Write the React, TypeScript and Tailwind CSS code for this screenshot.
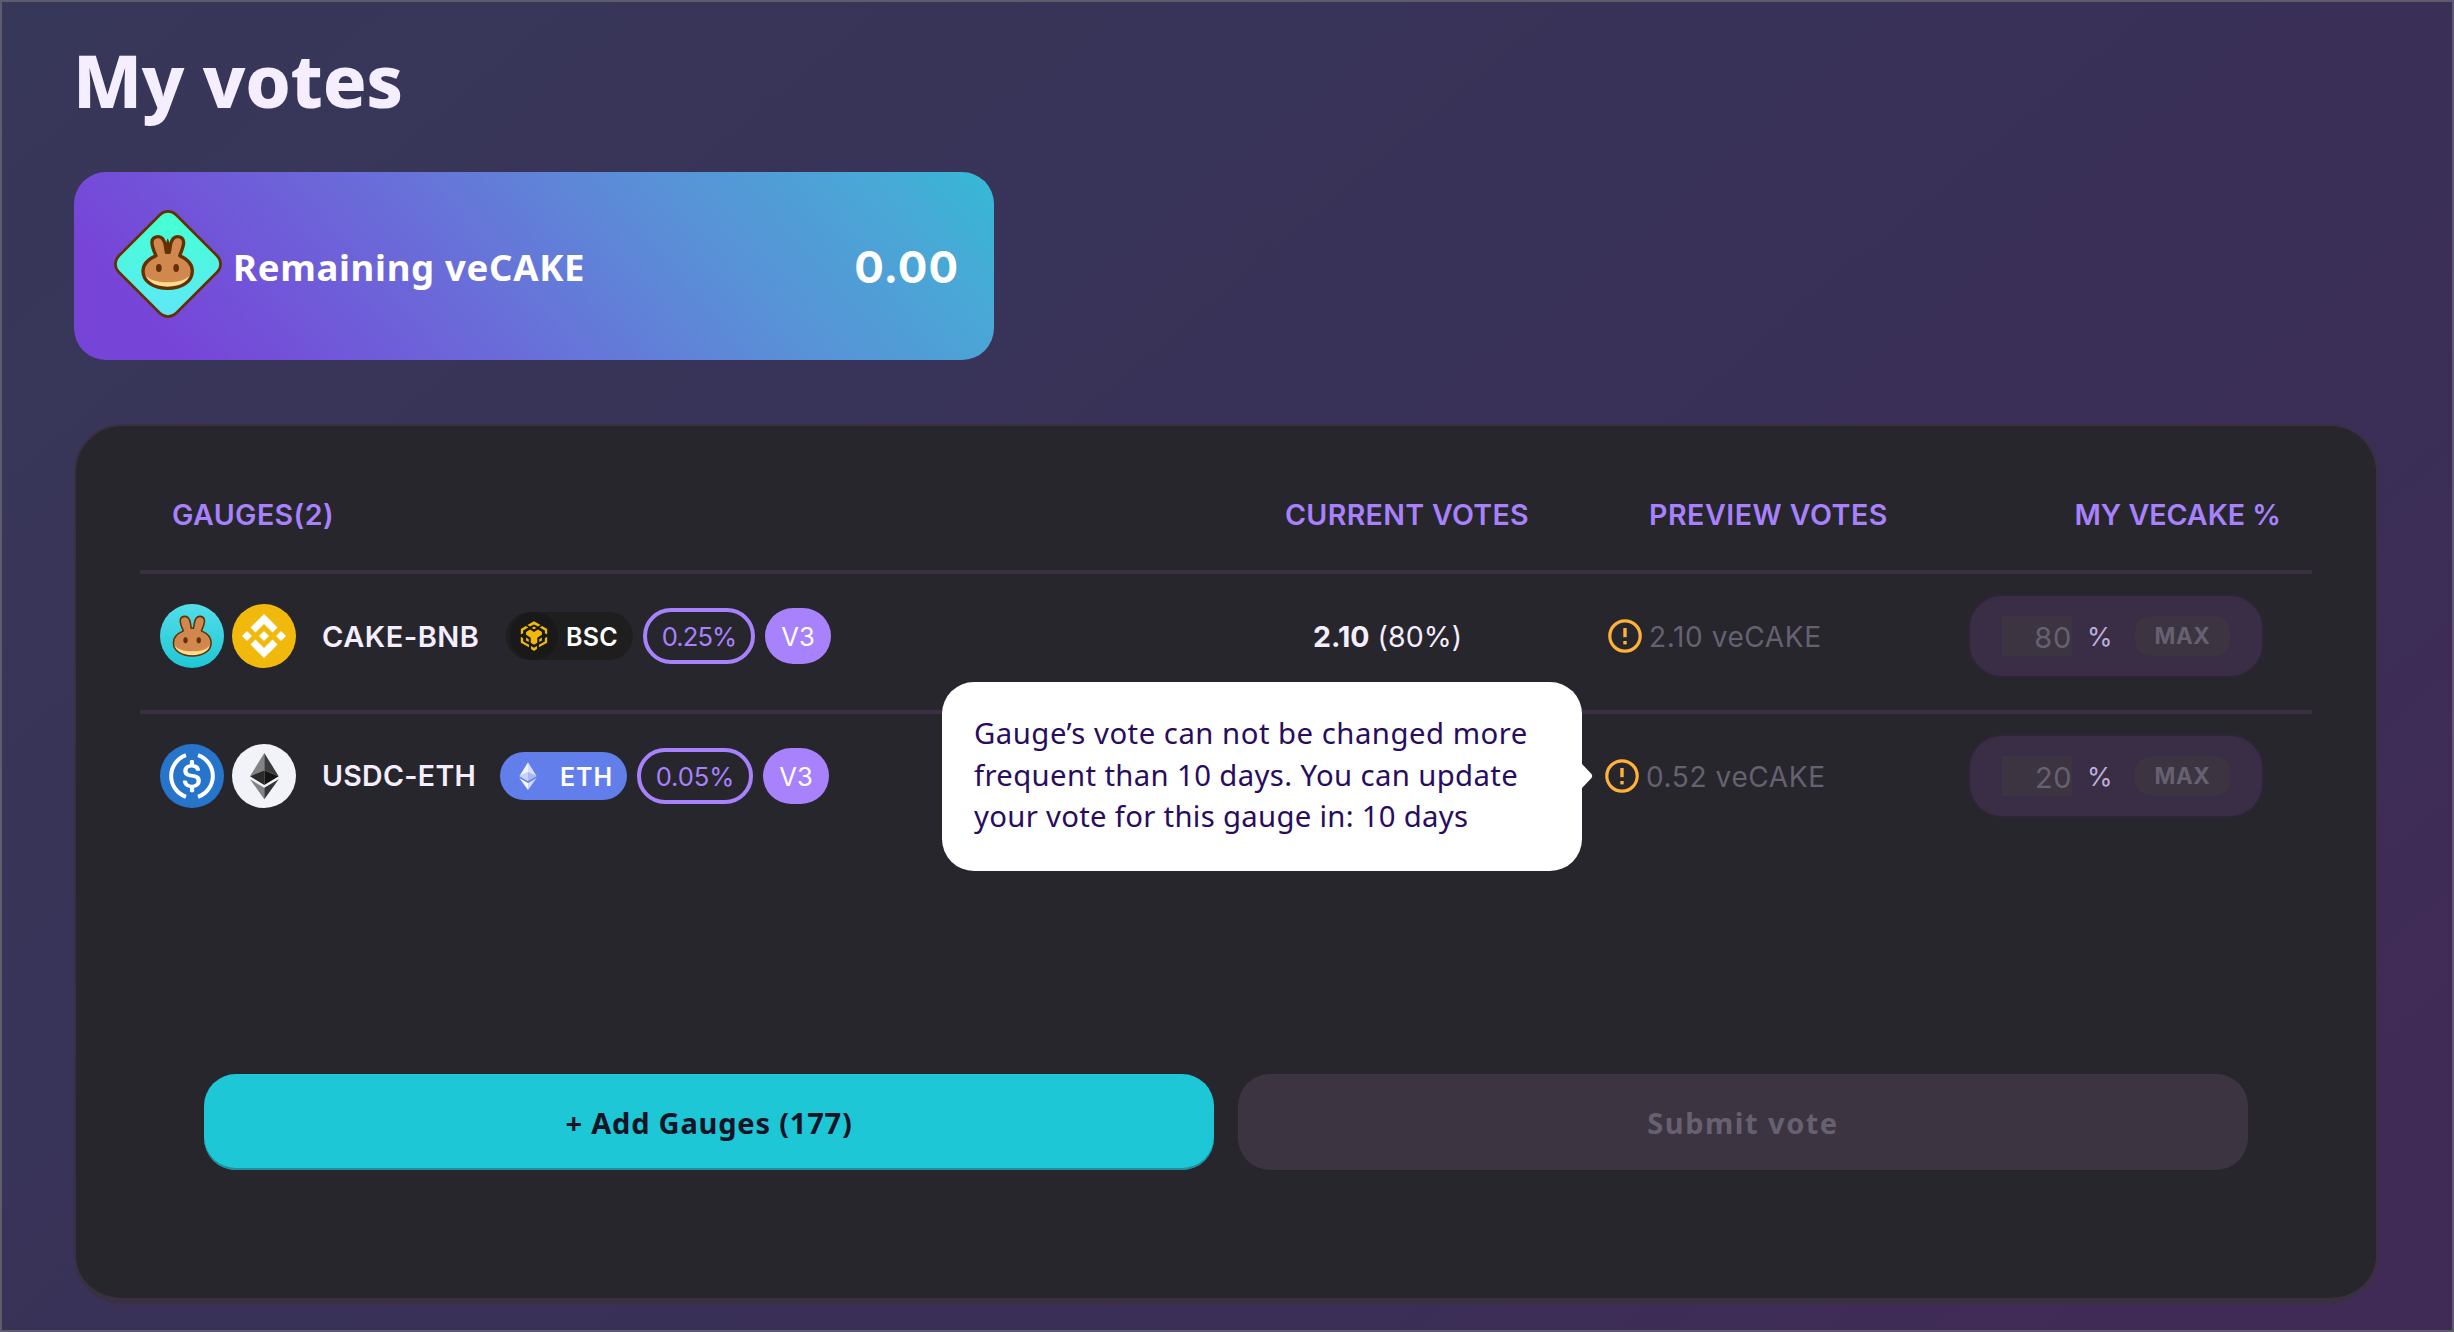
import type { ReactNode } from "react";

function Bunny({ outline }: { outline: number }) {
  return (
    <g>
      <path
        d="M168 197C160 180 155 165 156 155C157 145 164 140 175 140C187 140 193 151 196 167L199 187H208L211 167C214 151 220 140 232 140C244 140 250 147 251 157C251 168 245 183 239 197C262 207 277 222 277 243C277 275 245 295 203 295C161 295 129 275 129 243C129 222 145 207 168 197Z"
        fill="#D1884F"
      />
      <path d="M130 246C138 268 170 277 203 277C236 277 268 268 276 246C276 276 240 294 203 294C166 294 130 276 130 246Z" fill="#FEDC90" />
      <path
        d="M168 197C160 180 155 165 156 155C157 145 164 140 175 140C187 140 193 151 196 167L199 187H208L211 167C214 151 220 140 232 140C244 140 250 147 251 157C251 168 245 183 239 197C262 207 277 222 277 243C277 275 245 295 203 295C161 295 129 275 129 243C129 222 145 207 168 197Z"
        fill="none"
        stroke="#633001"
        strokeWidth={outline}
        strokeLinejoin="round"
      />
      <ellipse cx="176.500" cy="234" rx="8.500" ry="12" fill="#633001" />
      <ellipse cx="228.500" cy="234" rx="8.500" ry="12" fill="#633001" />
    </g>
  );
}

function VeCakeIcon() {
  return (
    <svg className="mb-1 h-[108px] w-[108px] shrink-0" viewBox="42 60 324 324">
      <defs>
        <linearGradient id="vecake" x1="0" y1="0" x2="1" y2="1">
          <stop offset="0.1" stopColor="#45FFD3" />
          <stop offset="1" stopColor="#60E6FA" />
        </linearGradient>
      </defs>
      <rect x="82.500" y="100.500" width="243" height="243" rx="34" transform="rotate(45 204 222)" fill="url(#vecake)" stroke="#633001" strokeWidth="8" />
      <path d="M196 165L203 145L211 165V192H196Z" fill="#633001" />
      <Bunny outline={10} />
    </svg>
  );
}

function CakeToken() {
  return (
    <svg className="h-16 w-16" viewBox="0 0 192 192">
      <defs>
        <linearGradient id="cake" x1="0" y1="0" x2="0" y2="1">
          <stop offset="0" stopColor="#53DEE9" />
          <stop offset="1" stopColor="#1FC7D4" />
        </linearGradient>
      </defs>
      <circle cx="96" cy="96" r="96" fill="url(#cake)" />
      <g transform="translate(-58.500 -70) scale(0.765)">
        <Bunny outline={6} />
      </g>
    </svg>
  );
}

function BnbToken() {
  return (
    <svg className="h-16 w-16" viewBox="0 0 32 32">
      <circle cx="16" cy="16" r="16" fill="#F0B90B" />
      <path
        transform="translate(-1.600 -1.600) scale(1.1)"
        fill="#fff"
        d="M12.116 14.404L16 10.52l3.886 3.886 2.26-2.26L16 6l-6.144 6.144 2.26 2.26zM6 16l2.26-2.26L10.52 16l-2.26 2.26L6 16zm6.116 1.596L16 21.48l3.886-3.886 2.26 2.259L16 26l-6.144-6.144-.003-.003 2.263-2.257zM21.48 16l2.26-2.26L26 16l-2.26 2.26L21.48 16zm-3.188-.002L16 18.294l-2.295-2.294L16 13.706l2.292 2.292z"
      />
    </svg>
  );
}

function UsdcToken() {
  return (
    <svg className="h-16 w-16" viewBox="0 0 64 64">
      <circle cx="32" cy="32" r="32" fill="#2775CA" />
      <path d="M26 11.200A22 22 0 0 0 26 52.800M38 11.200A22 22 0 0 1 38 52.800" fill="none" stroke="#fff" strokeWidth="4" />
      <path
        transform="translate(-3.200 -3) scale(2.2)"
        fill="#fff"
        d="M20.022 18.124c0-2.124-1.28-2.852-3.84-3.156-1.828-.243-2.193-.728-2.193-1.578 0-.85.61-1.396 1.828-1.396 1.097 0 1.707.364 2.011 1.275a.458.458 0 00.427.303h.975a.416.416 0 00.427-.425v-.06a3.04 3.04 0 00-2.743-2.489V9.142c0-.243-.183-.425-.487-.486h-.915c-.243 0-.426.182-.487.486v1.396c-1.829.242-2.986 1.456-2.986 2.974 0 2.002 1.218 2.791 3.778 3.095 1.707.303 2.255.668 2.255 1.639 0 .97-.853 1.638-2.011 1.638-1.585 0-2.133-.667-2.316-1.578-.06-.242-.244-.364-.427-.364h-1.036a.416.416 0 00-.426.425v.06c.243 1.518 1.219 2.61 3.23 2.914v1.457c0 .242.183.425.487.485h.915c.243 0 .426-.182.487-.485V21.34c1.829-.303 3.047-1.578 3.047-3.217z"
      />
    </svg>
  );
}

function EthToken() {
  return (
    <svg className="h-16 w-16" viewBox="0 0 64 64">
      <circle cx="32" cy="32" r="32" fill="#F2F3F8" />
      <path d="M32.300 9L18 32.200L32.300 26.200Z" fill="#828384" />
      <path d="M32.300 9L46.700 32.200L32.300 26.200Z" fill="#3A3B3B" />
      <path d="M18 32.200L32.300 26.200V41Z" fill="#2B2B2B" />
      <path d="M46.700 32.200L32.300 26.200V41Z" fill="#141414" />
      <path d="M18 35.300L32.300 43.800V55.200Z" fill="#828384" />
      <path d="M46.700 35.300L32.300 43.800V55.200Z" fill="#343535" />
    </svg>
  );
}

function BscMark() {
  return (
    <svg className="h-[30px] w-7" viewBox="0 0 84 91" fill="#F0B90B">
      <path d="M42 1L62 12L54 17L42 10.500L30 17L22 12Z" />
      <path d="M42 17L49 21L42 25L35 21Z" />
      <path d="M17 15L25 20L9 29V37L2 41V24Z" />
      <path d="M67 15L59 20L75 29V37L82 41V24Z" />
      <path d="M2 48L9 52V62L27 72V80L2 66Z" />
      <path d="M82 48L75 52V62L57 72V80L82 66Z" />
      <path d="M18 33L30 26L42 33L54 26L66 33V42L52 51V66L42 72L32 66V51L18 42Z" />
      <path d="M18 50L26 55V64L18 59Z" />
      <path d="M66 50L58 55V64L66 59Z" />
      <path d="M33 76L42 81L51 76V85L42 91L33 85Z" />
    </svg>
  );
}

function EthMark() {
  return (
    <svg className="h-7 w-[18px]" viewBox="0 0 54 84" fill="#fff">
      <path d="M27 1L1 43L27 31Z" fillOpacity="0.900" />
      <path d="M27 1L53 43L27 31Z" fillOpacity="0.750" />
      <path d="M1 43L27 31V58Z" fillOpacity="0.650" />
      <path d="M53 43L27 31V58Z" fillOpacity="0.450" />
      <path d="M1 48L27 63V84Z" fillOpacity="0.950" />
      <path d="M53 48L27 63V84Z" fillOpacity="0.700" />
    </svg>
  );
}

function WarningIcon() {
  return (
    <svg className="block h-[34px] w-[34px]" viewBox="0 0 34 34" fill="none" stroke="#FFB237">
      <circle cx="17" cy="17" r="15.200" strokeWidth="3.200" />
      <path d="M17 9V18.200" strokeWidth="3.400" />
      <path d="M17 22V25.400" strokeWidth="3.400" />
    </svg>
  );
}

function FeeChips({ fee, feeClass }: { fee: string; feeClass: string }) {
  return (
    <>
      <span className={`flex h-14 items-center justify-center rounded-[28px] border-4 border-[#A881FC] pt-0.5 text-[25.600px] text-[#A881FC] ${feeClass}`}>{fee}</span>
      <span className="ml-[10px] flex h-14 w-[66px] items-center justify-center rounded-[28px] bg-[#A881FC] pt-0.5 text-[25.600px] text-white">V3</span>
    </>
  );
}

function VoteInput({ value, valueClass }: { value: string; valueClass: string }) {
  return (
    <div className="flex h-[84px] w-[296px] items-center rounded-[34px] border-2 border-[#2D2535] bg-[#392E45] pl-8">
      <span className={`flex h-10 w-[70px] items-center justify-end bg-[#3C3440] pt-0.5 text-[29px] text-[#666171] ${valueClass}`}>{value}</span>
      <span className="ml-[15px] w-6 pt-0.5 text-[26px] text-[#BDAFDA]">%</span>
      <span className="ml-6 flex h-10 w-[95px] items-center justify-center rounded-2xl bg-[#3C3440] text-[22.400px] font-bold tracking-[0.7px] text-[#666171]">MAX</span>
    </div>
  );
}

function GaugeRow({ children }: { children: ReactNode }) {
  return (
    <div className="grid h-[140px] grid-cols-[1140px_320px_360px_352px] items-start border-t-4 border-[#3A3042] pt-5">{children}</div>
  );
}

export default function App() {
  return (
    <div className="h-[1332px] w-[2454px] overflow-hidden whitespace-nowrap border-2 border-[#5D5B6C] bg-[linear-gradient(139.73deg,#373759_0%,#393258_45%,#3B2E56_74%,#402B56_90%)] px-[72px] pt-[42px] font-['Inter','Noto_Sans',sans-serif] leading-none">
      <h1 className="-ml-px h-[72px] font-['Noto_Sans'] text-[72.500px] font-extrabold leading-[72px] tracking-[-0.3px] text-[#F4EEFF]">My votes</h1>

      <section className="mt-14 flex h-[188px] w-[920px] items-center rounded-[32px] bg-[linear-gradient(49deg,#7744D8_10%,#6A6CD9_41%,#5A8FD7_66%,#49A8D6_88%,#35B9D6_100%)] pl-10 pr-[35px] text-white">
        <VeCakeIcon />
        <span className="ml-[11px] pt-0.5 font-['Noto_Sans'] text-[36.500px] font-bold tracking-[0.7px]">Remaining veCAKE</span>
        <span className="ml-auto pt-0.5 text-[44px] font-bold tracking-[0.9px]">0.00</span>
      </section>

      <main className="mt-16 h-[880px] w-[2304px] rounded-[48px] border-x-2 border-b-[6px] border-t-2 border-[#3A3042] bg-[#27262C] px-16">
        <div className="grid h-36 grid-cols-[1140px_320px_360px_352px] items-center pt-[34px] text-[28.600px] font-semibold text-[#A881FC]">
          <span className="pl-8 tracking-[0.4px]">GAUGES(2)</span>
          <span className="pl-[5px] tracking-[0.3px]">CURRENT VOTES</span>
          <span className="pl-[49px] tracking-[0.5px]">PREVIEW VOTES</span>
          <span className="pr-[31px] text-right">MY VECAKE %</span>
        </div>

        <GaugeRow>
          <div className="flex h-[84px] items-center pl-5">
            <CakeToken />
            <span className="ml-2"><BnbToken /></span>
            <span className="ml-[26px] w-[184px] pt-px text-[29px] font-semibold tracking-[0.500px] text-[#F4EEFF]">CAKE-BNB</span>
            <span className="flex h-12 w-[127px] items-center rounded-full bg-[#1E1E1E] pl-1">
              <span className="flex h-12 w-12 items-center justify-center rounded-full bg-[#191919]"><BscMark /></span>
              <span className="ml-2 pt-0.5 text-[25px] font-semibold tracking-[0.3px] text-white">BSC</span>
            </span>
            <span className="ml-[10px] flex"><FeeChips fee="0.25%" feeClass="w-[112px] tracking-[-0.9px]" /></span>
          </div>
          <div className="flex h-[84px] items-center pl-[33px] pt-0.5 text-[28.500px] text-[#F4EEFF]">
            <b className="font-bold">2.10</b>
            <span className="ml-2 tracking-[0.1px]">(80%)</span>
          </div>
          <div className="flex h-[84px] items-center pl-2 text-[28px] text-[#666171]">
            <WarningIcon />
            <span className="ml-[7px] pt-0.5 tracking-[0.6px]">2.10 veCAKE</span>
          </div>
          <div className="pl-2"><VoteInput value="80" valueClass="tracking-[0.8px]" /></div>
        </GaugeRow>

        <GaugeRow>
          <div className="flex h-[84px] items-center pl-5">
            <UsdcToken />
            <span className="ml-2"><EthToken /></span>
            <span className="ml-[26px] w-[178px] pt-px text-[28.500px] font-semibold tracking-[0.3px] text-[#F4EEFF]">USDC-ETH</span>
            <span className="flex h-12 w-[127px] items-center rounded-full bg-[#627EEA] pl-[19px]">
              <EthMark />
              <span className="ml-[23px] pt-0.5 text-[25px] font-semibold tracking-[0.9px] text-white">ETH</span>
            </span>
            <span className="ml-[10px] flex"><FeeChips fee="0.05%" feeClass="w-[116px] tracking-[-0.1px]" /></span>
          </div>
          <div />
          <div className="flex h-[84px] items-center pl-[5px] text-[28px] text-[#666171]">
            <div className="relative">
              <WarningIcon />
              <div className="absolute right-[57px] top-[-77px] h-[189px] w-[640px] rounded-[32px] bg-white pl-8 pt-[31px] font-['Noto_Sans'] text-[29.300px] leading-[41.600px] text-[#280D5F]">
                <p className="tracking-[0.500px]">Gauge’s vote can not be changed more</p>
                <p className="tracking-[0.370px]">frequent than 10 days. You can update</p>
                <p className="tracking-[0.300px]">your vote for this gauge in: 10 days</p>
                <svg className="absolute -right-[11px] top-[82px] h-6 w-3" viewBox="0 0 12 24" fill="#fff">
                  <path d="M0 0H1L10.500 10Q12 12 10.500 14L1 24H0Z" />
                </svg>
              </div>
            </div>
            <span className="ml-[7px] pt-0.5 tracking-[0.600px]">0.52 veCAKE</span>
          </div>
          <div className="pl-2"><VoteInput value="20" valueClass="tracking-[0.5px]" /></div>
        </GaugeRow>

        <div className="mt-[224px] flex gap-6 pl-16 font-['Noto_Sans'] text-[29px] font-bold">
          <button className="h-24 w-[1010px] rounded-[32px] bg-[#1DC7D6] tracking-[0.800px] text-[#191326] shadow-[inset_0_-2px_0_#1D8E9B]">+ Add Gauges (177)</button>
          <button className="h-24 w-[1010px] rounded-[32px] bg-[#3C3440] tracking-[1.500px] text-[#666171]">Submit vote</button>
        </div>
      </main>
    </div>
  );
}
